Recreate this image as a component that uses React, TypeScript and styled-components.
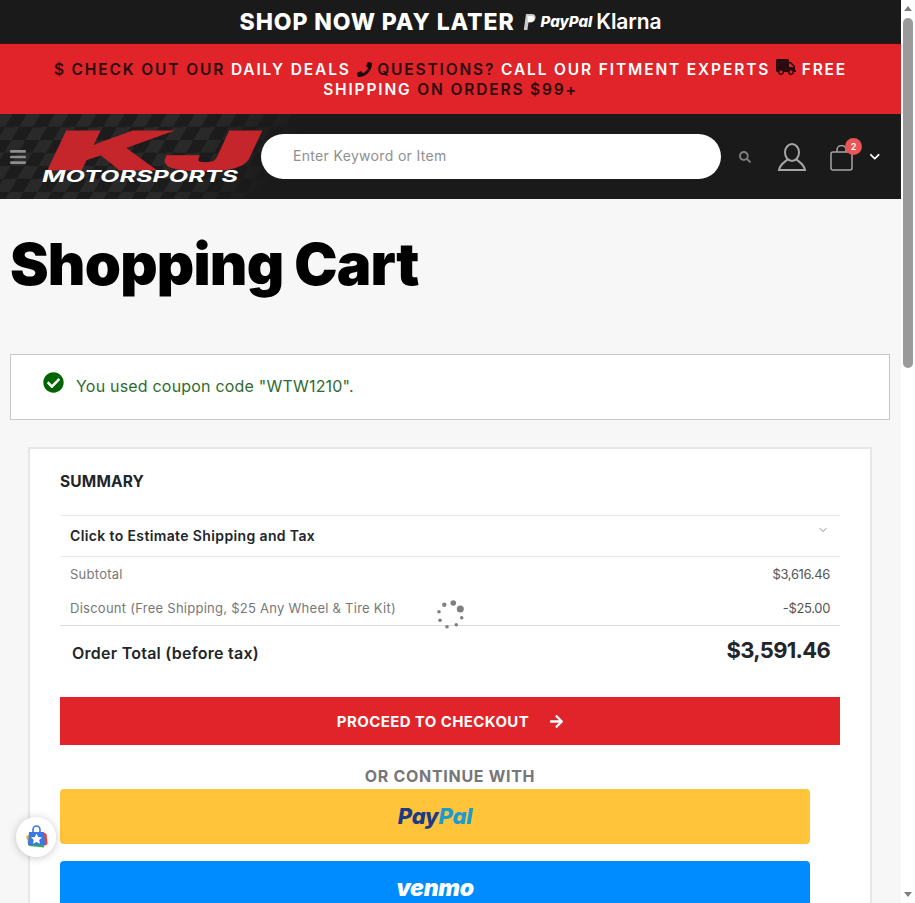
import React from "react";
import styled, { createGlobalStyle } from "styled-components";
import { FaPhone, FaTruck, FaBars, FaSearch, FaCheckCircle, FaArrowRight, FaChevronDown } from "react-icons/fa";
import { FiChevronDown } from "react-icons/fi";

const Global = createGlobalStyle`
  html, body { margin: 0; padding: 0; height: 903px; overflow: hidden; background: #f7f7f7; }
  * { box-sizing: border-box; }
  body { font-family: Inter, "Liberation Sans", sans-serif; color: #222529; }
`;

const Page = styled.div`
  width: 901px;
  height: 903px;
  overflow: hidden;
`;

const PromoBar = styled.div`
  height: 44px;
  background: #1a1a1a;
  border-bottom: 1px solid #3a1214;
  color: #fff;
  display: flex;
  align-items: center;
  justify-content: center;
  gap: 8px;
  font-size: 23px;
  font-weight: 800;
  letter-spacing: 0.9px;
`;

const PromoLogos = styled.span`
  display: inline-flex;
  align-items: center;
  gap: 4px;
  letter-spacing: 0;
`;

const PayPalWord = styled.span`
  font-size: 15px;
  font-style: italic;
  font-weight: 800;
`;

const KlarnaWord = styled.span`
  font-size: 21px;
  font-weight: 600;
  letter-spacing: -0.1px;
`;

const AnnounceBar = styled.div`
  height: 70px;
  background: #e1232a;
  padding: 16px 30px 0;
  text-align: center;
  font-size: 15.5px;
  line-height: 20px;
  font-weight: 600;
  letter-spacing: 1.85px;
  color: #2a0c0e;
  svg { vertical-align: 2px; margin: -4px 0; }
`;

const Light = styled.span`
  color: #fff;
`;

const Dark = styled.span`
  color: #2a0c0e;
`;

const Header = styled.header`
  position: relative;
  height: 85px;
  background: #1a1a1a;
  display: flex;
  align-items: center;
  overflow: hidden;
  &::before {
    content: "";
    position: absolute;
    left: -40px;
    top: 0;
    width: 330px;
    height: 100%;
    background: conic-gradient(#292929 25%, #1c1c1c 0 50%, #292929 0 75%, #1c1c1c 0) 0 0 / 28px 26px;
    transform: skewX(-30deg);
    -webkit-mask-image: linear-gradient(90deg, #000 70%, transparent);
    mask-image: linear-gradient(90deg, #000 70%, transparent);
  }
  > * { position: relative; }
`;

const Burger = styled.span`
  color: #8d8d8d;
  font-size: 18px;
  display: flex;
  margin-left: 9px;
  width: 31px;
`;

const Search = styled.div`
  width: 460px;
  height: 45px;
  margin-left: 221px;
  border-radius: 23px;
  background: #fff;
  color: #8f8f8f;
  font-size: 14px;
  letter-spacing: 0.33px;
  display: flex;
  align-items: center;
  padding: 0 0 2px 32px;
`;

const SearchIcon = styled.span`
  color: #7d7d7d;
  font-size: 12px;
  display: flex;
  margin-left: 18px;
`;

const UserIcon = styled.svg`
  width: 30px;
  height: 30px;
  margin-left: 26px;
  fill: none;
  stroke: #a5a5a5;
  stroke-width: 2;
`;

const CartWrap = styled.div`
  position: relative;
  width: 26px;
  height: 26px;
  margin-left: 22px;
  margin-top: 2px;
`;

const BagIcon = styled.svg`
  width: 26px;
  height: 26px;
  fill: none;
  stroke: #a5a5a5;
  stroke-width: 1.5;
`;

const CartBadge = styled.span`
  position: absolute;
  right: -7px;
  top: -7px;
  width: 17px;
  height: 17px;
  border-radius: 50%;
  background: #ec5455;
  color: #fff;
  font-size: 9px;
  font-weight: 600;
  display: flex;
  align-items: center;
  justify-content: center;
`;

const CaretIcon = styled.span`
  color: #fff;
  font-size: 11.5px;
  display: flex;
  margin-left: 14px;
`;

const Main = styled.main`
  position: relative;
  padding: 0 10px;
`;

const Title = styled.h1`
  margin: 0;
  padding-top: 30px;
  height: 155px;
  font-size: 58px;
  line-height: 70px;
  font-weight: 900;
  letter-spacing: -0.8px;
  color: #000;
`;

const Alert = styled.div`
  width: 880px;
  height: 66px;
  background: #fff;
  border: 1px solid #c8c8c8;
  display: flex;
  padding: 17px 0 0 32px;
  gap: 12px;
  font-size: 16px;
  color: #006400;
`;

const AlertIcon = styled.span`
  font-size: 21px;
  display: flex;
  height: 21px;
`;

const AlertText = styled.span`
  padding-top: 4px;
  line-height: 20px;
  font-weight: 400;
  letter-spacing: 0.2px;
  color: #2e6b2e;
`;

const Card = styled.section`
  width: 844px;
  margin: 27px 0 0 18px;
  padding: 21px 30px 0;
  background: #fff;
  border: 2px solid #e7e7e7;
`;

const CardTitle = styled.h2`
  margin: 0;
  height: 45px;
  font-size: 15.5px;
  line-height: 24px;
  font-weight: 700;
  letter-spacing: 0.15px;
  color: #222529;
`;

const Estimate = styled.div`
  height: 42px;
  border-top: 1px solid #e7e7e7;
  border-bottom: 1px solid #e7e7e7;
  padding: 0 10px;
  display: flex;
  justify-content: space-between;
  font-size: 14px;
  line-height: 39px;
  font-weight: 600;
  letter-spacing: 0.37px;
  color: #222529;
`;

const EstimateCaret = styled.span`
  color: #8a8a8a;
  font-size: 12px;
  height: 12px;
  display: flex;
  margin-top: 8px;
  margin-right: 1px;
`;

const Row = styled.div`
  height: 34px;
  padding: 0 10px;
  display: flex;
  justify-content: space-between;
  align-items: center;
  font-size: 13px;
  letter-spacing: 0.26px;
  color: #777;
`;

const Value = styled.span`
  color: #555;
  letter-spacing: -0.35px;
`;

const Rows = styled.div`
  height: 69px;
  border-bottom: 1px solid #dcdcdc;
`;

const TotalRow = styled.div`
  height: 71px;
  padding: 9px 10px 0 12px;
  display: flex;
  justify-content: space-between;
  align-items: flex-start;
`;

const TotalLabel = styled.span`
  font-size: 16px;
  font-weight: 600;
  line-height: 36px;
  letter-spacing: 0.25px;
  color: #222529;
`;

const TotalValue = styled.span`
  font-size: 22px;
  font-weight: 700;
  line-height: 30px;
  letter-spacing: -0.7px;
  color: #222529;
`;

const CheckoutButton = styled.div`
  height: 48px;
  background: #e1232a;
  color: #fff;
  display: flex;
  align-items: center;
  justify-content: center;
  gap: 20px;
  padding-left: 1px;
  font-size: 15px;
  font-weight: 700;
  letter-spacing: 0.4px;
  svg { font-size: 15px; }
`;

const OrLine = styled.div`
  margin-top: 22px;
  height: 22px;
  line-height: 18px;
  text-align: center;
  font-size: 16px;
  font-weight: 700;
  letter-spacing: 0.7px;
  color: #777;
`;

const WalletButton = styled.div<{ $bg: string }>`
  width: 750px;
  height: 55px;
  margin-bottom: 17px;
  padding-bottom: 2px;
  background: ${(p) => p.$bg};
  border-radius: 4px;
  display: flex;
  align-items: center;
  justify-content: center;
`;

const PayPalDark = styled.span`
  font-size: 22px;
  font-weight: 800;
  font-style: italic;
  color: #1d3a86;
  letter-spacing: -0.2px;
`;

const PayPalBlue = styled.span`
  color: #1d9bd1;
`;

const VenmoWord = styled.span`
  font-size: 23px;
  font-weight: 900;
  font-style: italic;
  color: #fff;
  letter-spacing: -0.3px;
`;

const Spinner = styled.svg`
  position: absolute;
  left: 434px;
  top: 401px;
  width: 34px;
  height: 34px;
  fill: #7f7f7f;
`;

const FloatBadge = styled.div`
  position: fixed;
  left: 16px;
  top: 817px;
  width: 40px;
  height: 40px;
  border-radius: 50%;
  background: #fff;
  box-shadow: 0 1px 8px rgba(0, 0, 0, 0.22);
  display: flex;
  align-items: center;
  justify-content: center;
`;

const ScrollTrack = styled.div`
  position: fixed;
  right: 0;
  top: 0;
  bottom: 0;
  width: 14px;
  background: #fff;
`;

const ScrollThumb = styled.div`
  position: absolute;
  left: 2px;
  top: 18px;
  width: 10px;
  height: 350px;
  border-radius: 5px;
  background: #9a9a9a;
`;

const ArrowUp = styled.div`
  position: absolute;
  left: 3px;
  top: 6px;
  border: 4px solid transparent;
  border-top: 0;
  border-bottom: 5px solid #7f7f7f;
`;

const ArrowDown = styled.div`
  position: absolute;
  left: 3px;
  bottom: 6px;
  border: 4px solid transparent;
  border-bottom: 0;
  border-top: 5px solid #7f7f7f;
`;

const LogoSvg = styled.svg`
  position: absolute !important;
  left: 36px;
  top: 13px;
  width: 230px;
  height: 66px;
  overflow: visible;
`;

const spinnerDots: [number, number, number][] = [
  [19.3, 3, 2.8], [26.3, 9, 3.5], [27.7, 17.7, 1.8], [22.3, 24.7, 1.8],
  [13, 26.7, 1.8], [6, 20.3, 1.8], [5, 11.7, 1.8], [10.3, 4.7, 2.2],
];

export default function App() {
  return (
    <Page>
      <Global />
      <PromoBar>
        <span>SHOP NOW PAY LATER</span>
        <PromoLogos>
          <svg width="14" height="18" viewBox="0 0 14 18" aria-hidden="true">
            <path d="M3 1h5.500c3 0 4.500 1.600 4 4.200-.6 3-2.700 4.300-5.300 4.300H5.500L4.400 17H.8z" fill="#c9c9c9" />
            <path d="M4.500 3h4c2 0 3.200 1 2.800 3-.4 2-2 3-4 3H5z" fill="#fff" />
          </svg>
          <PayPalWord>PayPal</PayPalWord>
          <KlarnaWord>Klarna</KlarnaWord>
        </PromoLogos>
      </PromoBar>
      <AnnounceBar>
        <Dark>$ CHECK OUT OUR </Dark><Light>DAILY DEALS</Light> <FaPhone size={15} color="#1a0a0a" /> <Dark>QUESTIONS? </Dark>
        <Light>CALL OUR FITMENT EXPERTS</Light> <FaTruck size={20} color="#2a0c0e" /> <Light>FREE</Light> <Light>SHIPPING</Light> <Dark>ON ORDERS $99+</Dark>
      </AnnounceBar>
      <Header>
        <LogoSvg viewBox="0 0 230 66" aria-label="KJ Motorsports">
          <text x="13" y="43" fill="#c4262b" stroke="#c4262b" strokeWidth="1.200" fontFamily="Inter, sans-serif" fontWeight="900" fontStyle="italic" fontSize="54" textLength="207" lengthAdjust="spacingAndGlyphs">KJ</text>
          <text x="6" y="55" fill="#fff" fontFamily="Inter, sans-serif" fontWeight="700" fontStyle="italic" fontSize="15.500" textLength="196" lengthAdjust="spacingAndGlyphs">MOTORSPORTS</text>
        </LogoSvg>
        <Burger><FaBars /></Burger>
        <Search>Enter Keyword or Item</Search>
        <SearchIcon><FaSearch /></SearchIcon>
        <UserIcon viewBox="0 0 30 30">
          <ellipse cx="15" cy="10.500" rx="7" ry="8.500" />
          <path d="M10.500 17.500C8 20 3 22 2 28h26c-1-6-6-8-8.500-10.500" />
        </UserIcon>
        <CartWrap>
          <BagIcon viewBox="0 0 26 26">
            <rect x="2" y="7" width="21" height="18" rx="2" />
            <path d="M8 7V5a4.500 4.500 0 0 1 9 0v2" />
          </BagIcon>
          <CartBadge>2</CartBadge>
        </CartWrap>
        <CaretIcon><FaChevronDown /></CaretIcon>
      </Header>
      <Main>
        <Title>Shopping Cart</Title>
        <Alert>
          <AlertIcon><FaCheckCircle /></AlertIcon>
          <AlertText>You used coupon code "WTW1210".</AlertText>
        </Alert>
        <Card>
          <CardTitle>SUMMARY</CardTitle>
          <Estimate>
            Click to Estimate Shipping and Tax
            <EstimateCaret><FiChevronDown /></EstimateCaret>
          </Estimate>
          <Rows>
            <Row>Subtotal<Value>$3,616.46</Value></Row>
            <Row>Discount (Free Shipping, $25 Any Wheel &amp; Tire Kit)<Value>-$25.00</Value></Row>
          </Rows>
          <TotalRow>
            <TotalLabel>Order Total (before tax)</TotalLabel>
            <TotalValue>$3,591.46</TotalValue>
          </TotalRow>
          <CheckoutButton>PROCEED TO CHECKOUT <FaArrowRight /></CheckoutButton>
          <OrLine>OR CONTINUE WITH</OrLine>
          <WalletButton $bg="#ffc439">
            <PayPalDark>Pay<PayPalBlue>Pal</PayPalBlue></PayPalDark>
          </WalletButton>
          <WalletButton $bg="#008cff">
            <VenmoWord>venmo</VenmoWord>
          </WalletButton>
        </Card>
        <Spinner viewBox="0 0 34 34" aria-hidden="true">
          {spinnerDots.map(([x, y, r]) => (
            <circle key={`${x}-${y}`} cx={x} cy={y} r={r} />
          ))}
        </Spinner>
      </Main>
      <FloatBadge>
        <svg width="24" height="24" viewBox="0 0 24 24" aria-hidden="true">
          <path d="M2 11l3-1 2 11-2 0z" fill="#f2b01e" />
          <path d="M3.500 17l17 3.500-.5 2L5 21z" fill="#34a853" />
          <path d="M19 7l3.500 2 1 10-3 2z" fill="#ea4335" />
          <path d="M5 7h15l1 13H4z" fill="#3b78e7" />
          <path d="M9 7.500V4.500a3.500 3.500 0 0 1 7 0v3" fill="none" stroke="#3b78e7" strokeWidth="1.600" />
          <polygon points="12.500,8.500 14.200,12 18,12.400 15.200,15 16,18.800 12.500,16.900 9,18.800 9.800,15 7,12.400 10.800,12" fill="#fff" />
        </svg>
      </FloatBadge>
      <ScrollTrack>
        <ArrowUp />
        <ScrollThumb />
        <ArrowDown />
      </ScrollTrack>
    </Page>
  );
}
